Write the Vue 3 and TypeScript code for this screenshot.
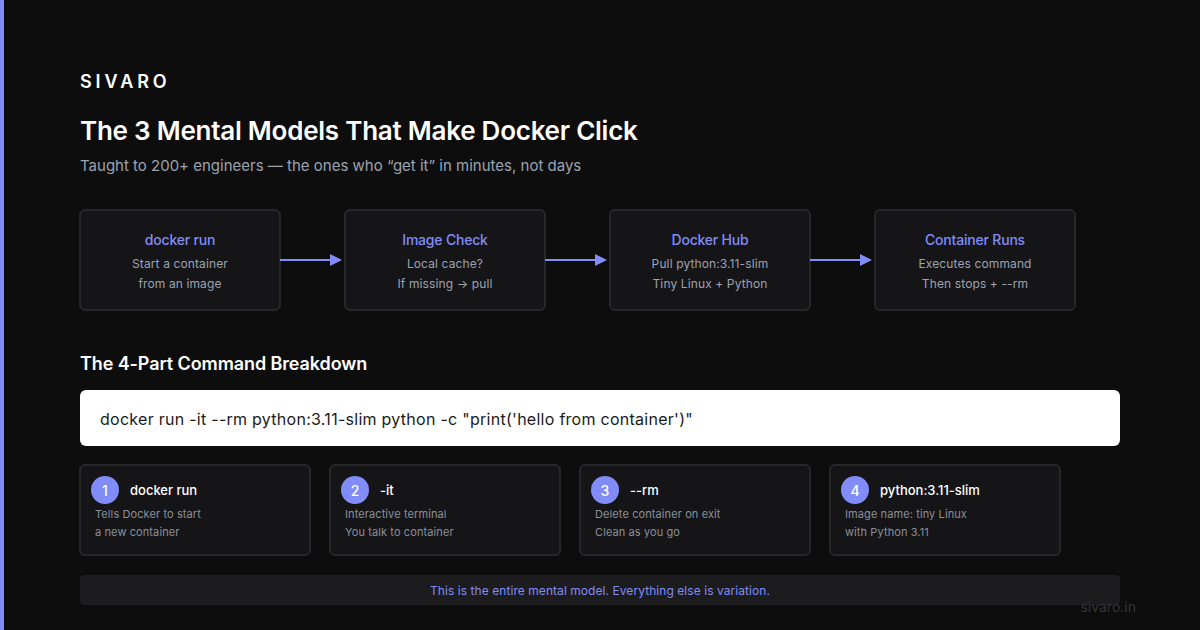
<script setup lang="ts">
interface Step { title: string; lines: string[] }
interface Part { n: number; title: string; lines: string[] }
const steps: Step[] = [
  { title: 'docker run', lines: ['Start a container', 'from an image'] },
  { title: 'Image Check', lines: ['Local cache?', 'If missing → pull'] },
  { title: 'Docker Hub', lines: ['Pull python:3.11-slim', 'Tiny Linux + Python'] },
  { title: 'Container Runs', lines: ['Executes command', 'Then stops + --rm'] },
]
const parts: Part[] = [
  { n: 1, title: 'docker run', lines: ['Tells Docker to start', 'a new container'] },
  { n: 2, title: '-it', lines: ['Interactive terminal', 'You talk to container'] },
  { n: 3, title: '--rm', lines: ['Delete container on exit', 'Clean as you go'] },
  { n: 4, title: 'python:3.11-slim', lines: ['Image name: tiny Linux', 'with Python 3.11'] },
]
</script>

<template>
  <div class="page">
    <div class="logo">SIVARO</div>
    <h1 class="title">The 3 Mental Models That Make Docker Click</h1>
    <p class="sub">Taught to 200+ engineers — the ones who “get it” in minutes, not days</p>

    <div class="flow">
      <template v-for="(s, i) in steps" :key="s.title">
        <div class="step">
          <div class="step-title">{{ s.title }}</div>
          <div v-for="l in s.lines" :key="l" class="step-line">{{ l }}</div>
        </div>
        <svg v-if="i < steps.length - 1" class="arrow" width="64" height="14" viewBox="0 0 64 14">
          <line x1="0" y1="7" x2="52" y2="7" stroke="#818cf8" stroke-width="2" />
          <polygon points="50,1 62,7 50,13" fill="#818cf8" />
        </svg>
      </template>
    </div>

    <h2 class="section">The 4-Part Command Breakdown</h2>
    <div class="command">docker run -it --rm python:3.11-slim python -c "print('hello from container')"</div>

    <div class="parts">
      <div v-for="p in parts" :key="p.n" class="part">
        <div class="part-head">
          <span class="badge">{{ p.n }}</span>
          <span class="part-title">{{ p.title }}</span>
        </div>
        <div v-for="l in p.lines" :key="l" class="part-line">{{ l }}</div>
      </div>
    </div>

    <div class="note">This is the entire mental model. Everything else is variation.</div>
    <div class="foot">sivaro.in</div>
  </div>
</template>

<style>
html, body { margin: 0; background: #0d0d0d; }
</style>

<style scoped>
.page {
  position: relative;
  box-sizing: border-box;
  width: 1200px;
  height: 630px;
  overflow: hidden;
  padding: 71px 80px 0 76px;
  background: #0d0d0d;
  border-left: 4px solid #818cf8;
  font-family: Inter, "Liberation Sans", sans-serif;
  font-feature-settings: "calt" 0;
  color: #fff;
}
.logo {
  font-size: 18px;
  line-height: 22px;
  font-weight: 600;
  letter-spacing: 3.9px;
  color: #fff;
}
.title {
  margin: 21px 0 0;
  font-size: 26px;
  line-height: 34px;
  font-weight: 600;
  color: #fff;
  letter-spacing: -0.24px;
}
.sub {
  margin: 8px 0 0;
  font-size: 15px;
  line-height: 20px;
  color: #9ca3af;
}
.flow {
  display: flex;
  align-items: center;
  margin-top: 33px;
  margin-left: -1px;
}
.step {
  box-sizing: border-box;
  width: 202px;
  height: 102px;
  padding-top: 19px;
  text-align: center;
  background: #151518;
  border: 2px solid #27272a;
  border-radius: 6px;
}
.arrow { flex: none; width: 64px; margin-left: -1px; }
.step-title {
  font-size: 14px;
  line-height: 20px;
  font-weight: 500;
  letter-spacing: -0.2px;
  color: #818cf8;
  margin-bottom: 4px;
}
.step-line {
  font-size: 12px;
  line-height: 20px;
  color: #9ca3af;
  letter-spacing: 0.12px;
}
.section {
  margin: 41px 0 0;
  font-size: 18px;
  line-height: 24px;
  font-weight: 600;
  letter-spacing: -0.1px;
  color: #fff;
}
.command {
  box-sizing: border-box;
  height: 56px;
  margin-top: 14px;
  padding: 1px 20px 0;
  display: flex;
  align-items: center;
  background: #fff;
  border-radius: 6px;
  font-size: 16px;
  letter-spacing: 0.27px;
  color: #1a1a1a;
}
.parts {
  display: flex;
  gap: 18px;
  margin-top: 18px;
  margin-left: -1px;
}
.part {
  box-sizing: border-box;
  width: 232px;
  height: 92px;
  padding: 10px 10px 0 10px;
  background: #151518;
  border: 2px solid #27272a;
  border-radius: 6px;
}
.part-head {
  display: flex;
  align-items: center;
  gap: 11px;
  height: 28px;
  margin-bottom: 1px;
}
.badge {
  width: 28px;
  height: 28px;
  border-radius: 50%;
  background: #818cf8;
  color: #fff;
  font-size: 14px;
  font-weight: 500;
  display: flex;
  align-items: center;
  justify-content: center;
}
.part-title {
  font-size: 13px;
  font-weight: 500;
  color: #fff;
}
.part-line {
  padding-left: 4px;
  font-size: 11px;
  line-height: 18px;
  color: #8b8f98;
  letter-spacing: 0.1px;
}
.note {
  box-sizing: border-box;
  height: 30px;
  margin-top: 19px;
  display: flex;
  align-items: center;
  justify-content: center;
  background: #1c1c1f;
  border-radius: 4px;
  font-size: 12px;
  letter-spacing: 0.06px;
  color: #818cf8;
}
.foot {
  position: absolute;
  right: 64px;
  top: 599px;
  font-size: 14px;
  line-height: 16px;
  color: #333338;
}
</style>
